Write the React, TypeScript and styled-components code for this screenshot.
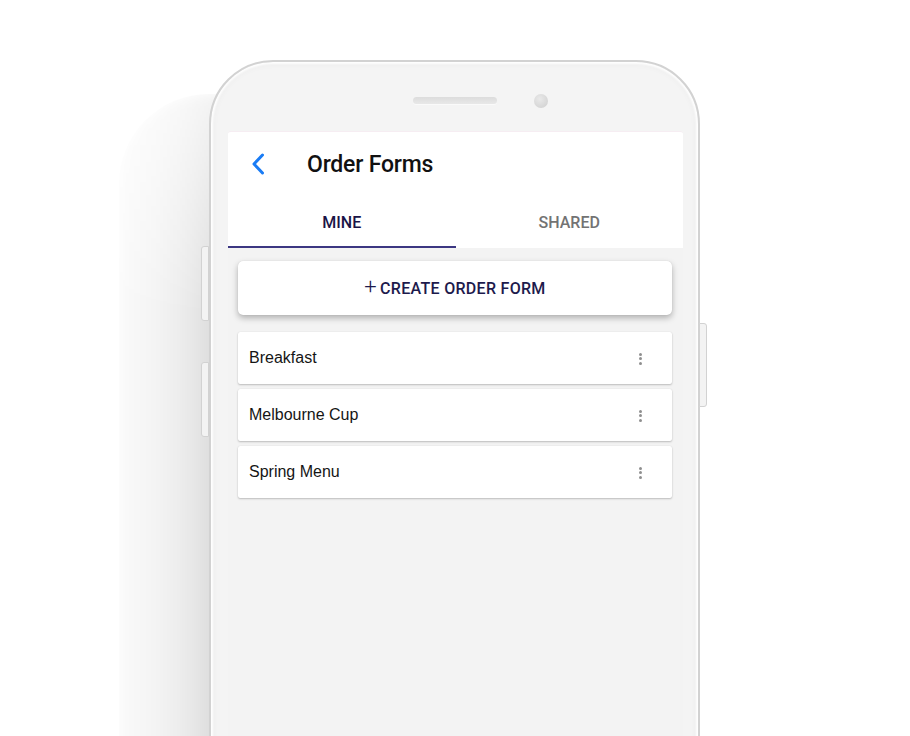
import React from "react";
import styled, { createGlobalStyle } from "styled-components";

const GlobalStyle = createGlobalStyle`
  html, body {
    margin: 0;
    padding: 0;
    background: #ffffff;
    overflow: hidden;
  }
  * { box-sizing: border-box; }
`;

const Stage = styled.div`
  position: relative;
  z-index: 0;
  width: 910px;
  height: 736px;
  overflow: hidden;
  padding: 60px 0 0 209px;
  background: #ffffff;
`;

const Phone = styled.div`
  position: relative;
  width: 491px;
  height: 760px;
  background: #f4f4f4;
  border: 2px solid #d2d2d2;
  border-radius: 64px;
  box-shadow: inset 0 0 2px 2px rgba(255, 255, 255, 0.95),
    inset 0 0 8px rgba(0, 0, 0, 0.06);
  display: flex;
  flex-direction: column;

  &::before {
    content: "";
    position: absolute;
    left: -92px;
    top: 32px;
    width: 120px;
    bottom: 0;
    border-top-left-radius: 90px;
    background: linear-gradient(
      to right,
      rgba(0, 0, 0, 0.02) 0%,
      rgba(0, 0, 0, 0.045) 30%,
      rgba(0, 0, 0, 0.08) 55%,
      rgba(0, 0, 0, 0.135) 78%,
      rgba(0, 0, 0, 0.15) 100%
    );
    -webkit-mask-image: linear-gradient(to bottom, rgba(0, 0, 0, 0.35) 0px, #000 220px);
    mask-image: linear-gradient(to bottom, rgba(0, 0, 0, 0.35) 0px, #000 220px);
    filter: blur(6px);
    z-index: -1;
  }
`;

const SideButton = styled.div<{ $side: "left" | "right"; $top: number; $height: number }>`
  position: absolute;
  top: ${(p) => p.$top}px;
  height: ${(p) => p.$height}px;
  width: 8px;
  ${(p) => (p.$side === "left" ? "left: -10px;" : "right: -9px;")}
  background: #f3f3f3;
  border: 1px solid #d2d2d2;
  border-radius: ${(p) => (p.$side === "left" ? "3px 0 0 3px" : "0 3px 3px 0")};
`;

const Notch = styled.div`
  height: 69px;
  flex-shrink: 0;
  display: grid;
  grid-template-columns: 1fr auto 1fr;
  align-items: start;
  padding-top: 35px;
`;

const Speaker = styled.div`
  grid-column: 2;
  width: 84px;
  height: 7px;
  border-radius: 4px;
  background: linear-gradient(to bottom, #dcdcdc, #e8e8e8);
  box-shadow: 0 1px 0 #fafafa;
`;

const Camera = styled.div`
  grid-column: 3;
  justify-self: start;
  margin-left: 37px;
  margin-top: -3px;
  width: 14px;
  height: 14px;
  border-radius: 50%;
  background: radial-gradient(circle at 40% 35%, #e9e9e9 0%, #d6d6d6 70%, #cfcfcf 100%);
`;

const Screen = styled.div`
  flex: 1;
  margin: 0 15px 0 17px;
  background: #f3f3f3;
  border-radius: 3px 3px 0 0;
  border-top: 1px solid #f6edf2;
  display: flex;
  flex-direction: column;
  overflow: hidden;
`;

const Header = styled.div`
  background: #ffffff;
  display: flex;
  flex-direction: column;
`;

const TitleRow = styled.div`
  height: 66px;
  display: flex;
  align-items: center;
  padding: 0 0 2px 22px;
`;

const BackButton = styled.button`
  background: none;
  border: none;
  padding: 0;
  width: 16px;
  height: 22px;
  display: flex;
  align-items: center;
  justify-content: center;
  margin-right: 41px;
  cursor: pointer;
`;

const Title = styled.h1`
  margin: 0;
  font-family: Roboto, "Liberation Sans", sans-serif;
  font-weight: 500;
  font-size: 23px;
  letter-spacing: -0.2px;
  color: #111111;
`;

const Tabs = styled.div`
  display: flex;
  height: 50px;
`;

const Tab = styled.div<{ $active?: boolean }>`
  flex: 1;
  display: flex;
  align-items: center;
  justify-content: center;
  font-family: Roboto, "Liberation Sans", sans-serif;
  font-weight: 500;
  font-size: 16px;
  color: ${(p) => (p.$active ? "#1a1446" : "#737373")};
  border-bottom: 2px solid ${(p) => (p.$active ? "#3c3782" : "transparent")};
`;

const Content = styled.div`
  flex: 1;
  padding: 13px 11px 0 10px;
  display: flex;
  flex-direction: column;
`;

const CreateButton = styled.button`
  height: 54px;
  width: 100%;
  border: none;
  background: #ffffff;
  border-radius: 5px;
  box-shadow: 0 3px 6px rgba(0, 0, 0, 0.28), 0 0 1px rgba(0, 0, 0, 0.15);
  font-family: Roboto, "Liberation Sans", sans-serif;
  font-weight: 500;
  font-size: 16px;
  letter-spacing: 0.3px;
  color: #1d1a4c;
  display: flex;
  align-items: center;
  justify-content: center;
  gap: 3px;
  margin-bottom: 17px;
  cursor: pointer;
`;

const Plus = styled.span`
  font-size: 22px;
  font-weight: 300;
  line-height: 1;
  margin-top: -2px;
`;

const List = styled.div`
  display: flex;
  flex-direction: column;
  gap: 5px;
`;

const Card = styled.div`
  height: 52px;
  background: #ffffff;
  border-radius: 2px;
  box-shadow: 0 1px 2px rgba(0, 0, 0, 0.22), 0 0 1px rgba(0, 0, 0, 0.12);
  display: flex;
  align-items: center;
  justify-content: space-between;
  padding: 0 30px 0 11px;
`;

const CardLabel = styled.span`
  font-family: "Liberation Sans", Arial, sans-serif;
  font-size: 16px;
  color: #151515;
`;

const Dots = styled.div`
  display: flex;
  flex-direction: column;
  gap: 1.5px;
  padding-top: 1px;
`;

const Dot = styled.span`
  width: 3px;
  height: 3px;
  border-radius: 50%;
  background: #8f8f8f;
`;

const MoreIcon = () => (
  <Dots>
    <Dot />
    <Dot />
    <Dot />
  </Dots>
);

const items = ["Breakfast", "Melbourne Cup", "Spring Menu"];

export default function App() {
  return (
    <>
      <GlobalStyle />
      <Stage>
        <Phone>
          <SideButton $side="left" $top={184} $height={75} />
          <SideButton $side="left" $top={300} $height={75} />
          <SideButton $side="right" $top={261} $height={84} />
          <Notch>
            <Speaker />
            <Camera />
          </Notch>
          <Screen>
            <Header>
              <TitleRow>
                <BackButton aria-label="Back">
                  <svg width="14" height="22" viewBox="0 0 14 22" fill="none">
                    <path
                      d="M11.5 2 L3 11 L11.5 20"
                      stroke="#1a7cf5"
                      strokeWidth="3"
                      strokeLinecap="round"
                      strokeLinejoin="round"
                    />
                  </svg>
                </BackButton>
                <Title>Order Forms</Title>
              </TitleRow>
              <Tabs>
                <Tab $active>MINE</Tab>
                <Tab>SHARED</Tab>
              </Tabs>
            </Header>
            <Content>
              <CreateButton>
                <Plus>+</Plus>CREATE ORDER FORM
              </CreateButton>
              <List>
                {items.map((name) => (
                  <Card key={name}>
                    <CardLabel>{name}</CardLabel>
                    <MoreIcon />
                  </Card>
                ))}
              </List>
            </Content>
          </Screen>
        </Phone>
      </Stage>
    </>
  );
}
